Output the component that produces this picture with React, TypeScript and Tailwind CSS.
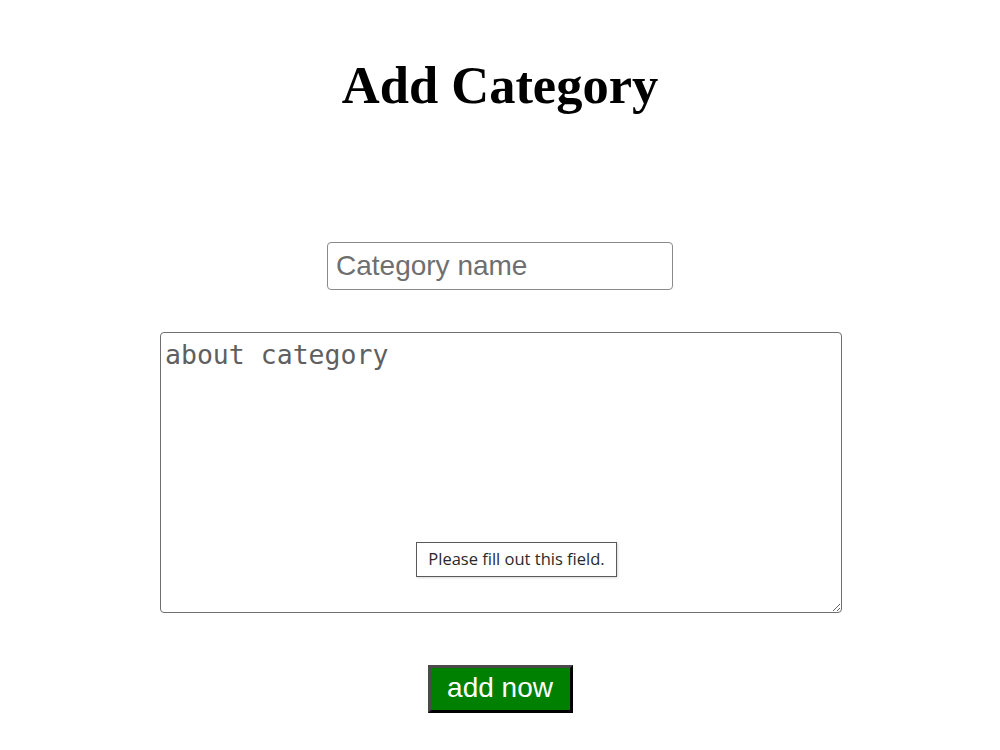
import React from "react";

export default function App() {
  return (
    <div className="min-h-[750px] w-[1000px] bg-white flex flex-col items-center">
      <h1 className="mt-[59px] text-[52.5px] leading-[53px] font-bold text-black font-['Liberation_Serif','Times_New_Roman',serif]">
        Add Category
      </h1>

      <input
        type="text"
        placeholder="Category name"
        className="mt-[130px] w-[346px] h-[48px] border border-[#8a8a8a] rounded-[4px] pl-[8px] text-[28px] text-black placeholder:text-[#6f6f6f] outline-none font-['Liberation_Sans',Arial,sans-serif]"
      />

      <div className="relative mt-[42px] w-[682px] h-[281px] ml-[2px]">
        <textarea
          placeholder="about category"
          className="block w-full h-full border border-[#6f6f6f] rounded-[4px] pl-[4px] pt-[6px] text-[26.5px] leading-[32px] text-black placeholder:text-[#5f5f5f] outline-none resize font-['DejaVu_Sans_Mono','Liberation_Mono',monospace]"
        />
        {/* validation bubble shown over the empty textarea */}
        <div className="absolute left-[256px] top-[210px] w-[201px] h-[35px] border border-[#5a5a5a] bg-white flex items-center justify-center text-[16.5px] text-[#2a2a2a] shadow-[1px_1px_2px_rgba(0,0,0,0.15)] font-['Open_Sans','Noto_Sans',sans-serif]">
          Please fill out this field.
        </div>
      </div>

      <button className="mt-[52px] w-[145px] h-[48px] bg-[#008000] text-white text-[28px] leading-none border-[3px] border-t-[#4a4a4a] border-l-[#4a4a4a] border-b-black border-r-black flex items-center justify-center pb-[2px] font-['Liberation_Sans',Arial,sans-serif]">
        add now
      </button>
    </div>
  );
}
